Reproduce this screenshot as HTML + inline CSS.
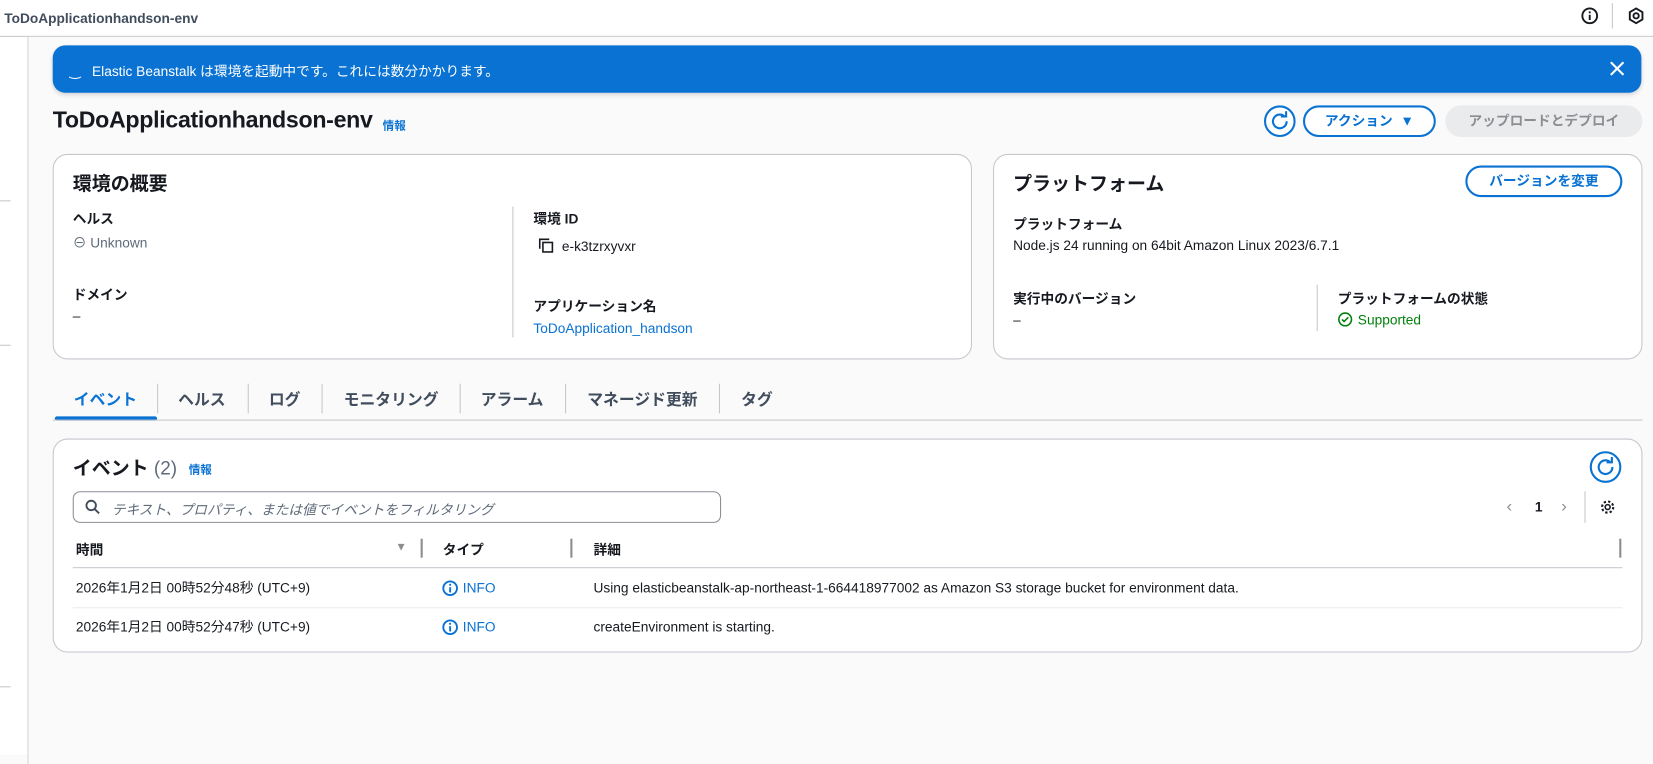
<!DOCTYPE html>
<html><head><meta charset="utf-8"><style>
*{box-sizing:border-box;margin:0;padding:0}
html,body{width:1653px;height:754px;overflow:hidden;background:#fafafa}
#w{position:absolute;left:0;top:0;width:1568px;height:716px;transform:scale(1.0542);transform-origin:0 0;font-family:"Liberation Sans","Noto Sans CJK JP",sans-serif;color:#16191f;font-size:13px}
.a{position:absolute;white-space:nowrap}
.top{left:0;top:0;width:1568px;height:35px;border-bottom:1px solid #c6c6cd;background:#fff}
.side{left:26px;top:35px;width:1px;height:690px;background:#d5d5da}
.main{left:27px;top:35px;width:1545px;height:690px;background:#fafafa}
.card{position:absolute;background:#fff;border:1px solid #c6c6cd;border-radius:14px}
.lbl{font-weight:bold;font-size:13px}
.link{color:#0972d3}
.btn{position:absolute;border:2px solid #0972d3;border-radius:18px;color:#0972d3;font-weight:bold;text-align:center;background:#fff}
.tab{position:absolute;top:368px;font-size:15px;font-weight:bold;color:#414d5c}
.sep{position:absolute;top:364px;width:1px;height:28px;background:#c6c6cd}
</style></head><body><div id="w">
<div class="a" style="left:0;top:0;width:27px;height:716px;background:#fff"></div>
<div class="a top"></div>
<div class="a" style="left:4px;top:10px;font-size:13px;font-weight:bold;color:#414d5c">ToDoApplicationhandson-env</div>
<svg class="a" style="left:1499px;top:6px" width="18" height="18" viewBox="0 0 18 18"><circle cx="9" cy="9" r="7" fill="none" stroke="#16191f" stroke-width="1.8"/><rect x="8.1" y="8" width="1.8" height="5" fill="#16191f"/><rect x="8.1" y="4.8" width="1.8" height="1.8" fill="#16191f"/></svg>
<div class="a" style="left:1529px;top:3px;width:1px;height:24px;background:#c6c6cd"></div>
<svg class="a" style="left:1543px;top:6px" width="18" height="18" viewBox="0 0 18 18"><path d="M9 2L15 5.5V12.5L9 16L3 12.5V5.5Z" fill="none" stroke="#16191f" stroke-width="1.8"/><circle cx="9" cy="9" r="2.5" fill="none" stroke="#16191f" stroke-width="1.8"/></svg>
<div class="a main"></div>
<div class="a side"></div>
<div class="a" style="left:0;top:190px;width:10px;height:1px;background:#c6c6cd"></div>
<div class="a" style="left:0;top:327px;width:10px;height:1px;background:#c6c6cd"></div>
<div class="a" style="left:0;top:651px;width:10px;height:1px;background:#c6c6cd"></div>

<div class="a" style="left:50px;top:43px;width:1507px;height:45px;background:#0972d3;border-radius:12px;box-shadow:0 2px 4px rgba(0,0,0,.15)"></div>
<div class="a" style="left:66px;top:57px;color:#fff;font-size:13px">‿&nbsp;&nbsp; Elastic Beanstalk は環境を起動中です。これには数分かかります。</div>
<svg class="a" style="left:1526px;top:57px" width="16" height="16" viewBox="0 0 16 16"><path d="M2 2L14 14M14 2L2 14" stroke="#fff" stroke-width="2"/></svg>

<div class="a" style="left:50px;top:101px;font-size:22px;font-weight:bold;letter-spacing:-0.3px">ToDoApplicationhandson-env</div>
<div class="a link" style="left:363px;top:111px;font-size:11px;font-weight:bold">情報</div>
<div class="btn" style="left:1199px;top:100px;width:30px;height:30px;border-radius:50%"><svg width="26" height="26" viewBox="0 0 26 26"><path d="M18 9A6.5 6.5 0 1 0 19.5 13" fill="none" stroke="#0972d3" stroke-width="2"/><path d="M14 8.5H19V3.5" fill="none" stroke="#0972d3" stroke-width="2"/></svg></div>
<div class="btn" style="left:1236px;top:100px;width:126px;height:30px;line-height:26px;font-size:13px">アクション&nbsp; ▼</div>
<div class="a" style="left:1371px;top:100px;width:187px;height:30px;background:#e9ebed;border-radius:18px;text-align:center;line-height:30px;color:#8d8d92;font-weight:bold">アップロードとデプロイ</div>

<div class="card" style="left:50px;top:146px;width:872px;height:195px"></div>
<div class="a" style="left:69px;top:160px;font-size:18px;font-weight:bold">環境の概要</div>
<div class="a lbl" style="left:69px;top:197px">ヘルス</div>
<div class="a" style="left:69px;top:220px;color:#5f6b7a">⊖ Unknown</div>
<div class="a lbl" style="left:69px;top:269px">ドメイン</div>
<div class="a" style="left:69px;top:292px">–</div>
<div class="a" style="left:486px;top:196px;width:1px;height:124px;background:#c6c6cd"></div>
<div class="a lbl" style="left:506px;top:197px">環境 ID</div>
<svg class="a" style="left:510px;top:225px" width="16" height="16" viewBox="0 0 16 16"><rect x="5" y="5" width="9" height="9" fill="none" stroke="#16191f" stroke-width="1.5"/><path d="M2 11V2H11" fill="none" stroke="#16191f" stroke-width="1.5"/></svg>
<div class="a" style="left:533px;top:226px">e-k3tzrxyvxr</div>
<div class="a lbl" style="left:506px;top:280px">アプリケーション名</div>
<div class="a link" style="left:506px;top:304px">ToDoApplication_handson</div>

<div class="card" style="left:942px;top:146px;width:616px;height:195px"></div>
<div class="a" style="left:961px;top:160px;font-size:18px;font-weight:bold">プラットフォーム</div>
<div class="btn" style="left:1390px;top:157px;width:149px;height:30px;line-height:26px">バージョンを変更</div>
<div class="a lbl" style="left:961px;top:202px">プラットフォーム</div>
<div class="a" style="left:961px;top:225px">Node.js 24 running on 64bit Amazon Linux 2023/6.7.1</div>
<div class="a lbl" style="left:961px;top:273px">実行中のバージョン</div>
<div class="a" style="left:961px;top:296px">–</div>
<div class="a" style="left:1249px;top:270px;width:1px;height:44px;background:#c6c6cd"></div>
<div class="a lbl" style="left:1269px;top:273px">プラットフォームの状態</div>
<svg class="a" style="left:1269px;top:296px" width="14" height="14" viewBox="0 0 14 14"><circle cx="7" cy="7" r="6" fill="none" stroke="#037f0c" stroke-width="1.5"/><path d="M4 7L6 9L10 5" fill="none" stroke="#037f0c" stroke-width="1.5"/></svg>
<div class="a" style="left:1288px;top:296px;color:#037f0c">Supported</div>

<div class="tab" style="left:70px;color:#0972d3">イベント</div>
<div class="a" style="left:52px;top:395px;width:97px;height:4px;background:#0972d3;border-radius:2px"></div>
<div class="sep" style="left:149px"></div>
<div class="tab" style="left:169px">ヘルス</div>
<div class="sep" style="left:235px"></div>
<div class="tab" style="left:255px">ログ</div>
<div class="sep" style="left:305px"></div>
<div class="tab" style="left:326px">モニタリング</div>
<div class="sep" style="left:436px"></div>
<div class="tab" style="left:456px">アラーム</div>
<div class="sep" style="left:536px"></div>
<div class="tab" style="left:557px">マネージド更新</div>
<div class="sep" style="left:682px"></div>
<div class="tab" style="left:703px">タグ</div>
<div class="a" style="left:50px;top:398px;width:1508px;height:1px;background:#c6c6cd"></div>

<div class="card" style="left:50px;top:416px;width:1508px;height:203px"></div>
<div class="a" style="left:69px;top:430px;font-size:18px;font-weight:bold">イベント <span style="font-weight:normal;color:#5f6b7a">(2)</span></div>
<div class="a link" style="left:179px;top:437px;font-size:11px;font-weight:bold">情報</div>
<div class="btn" style="left:1508px;top:428px;width:30px;height:30px;border-radius:50%"><svg width="26" height="26" viewBox="0 0 26 26"><path d="M18 9A6.5 6.5 0 1 0 19.5 13" fill="none" stroke="#0972d3" stroke-width="2"/><path d="M14 8.5H19V3.5" fill="none" stroke="#0972d3" stroke-width="2"/></svg></div>
<div class="a" style="left:69px;top:466px;width:615px;height:30px;border:1px solid #8c8c94;border-radius:7px;background:#fff"></div>
<svg class="a" style="left:80px;top:473px" width="16" height="16" viewBox="0 0 16 16"><circle cx="6.5" cy="6.5" r="4.5" fill="none" stroke="#414d5c" stroke-width="1.8"/><path d="M10 10L14 14" stroke="#414d5c" stroke-width="1.8"/></svg>
<div class="a" style="left:106px;top:473px;color:#5f6b7a;font-style:italic">テキスト、プロパティ、または値でイベントをフィルタリング</div>
<div class="a" style="left:1429px;top:472px;color:#8d8d92;font-size:16px">‹</div>
<div class="a" style="left:1456px;top:473px;font-weight:bold">1</div>
<div class="a" style="left:1481px;top:472px;color:#8d8d92;font-size:16px">›</div>
<div class="a" style="left:1503px;top:466px;width:1px;height:30px;background:#c6c6cd"></div>
<svg class="a" style="left:1517px;top:473px" width="16" height="16" viewBox="0 0 16 16"><circle cx="8" cy="8" r="2.3" fill="none" stroke="#16191f" stroke-width="1.5"/><circle cx="8" cy="8" r="5.3" fill="none" stroke="#16191f" stroke-width="2" stroke-dasharray="2.2 2"/></svg>

<div class="a lbl" style="left:72px;top:511px">時間</div>
<div class="a" style="left:375px;top:513px;color:#8d8d92;font-size:11px">▼</div>
<div class="a" style="left:399px;top:511px;width:2px;height:18px;background:#8d8d92"></div>
<div class="a lbl" style="left:420px;top:511px">タイプ</div>
<div class="a" style="left:541px;top:511px;width:2px;height:18px;background:#8d8d92"></div>
<div class="a lbl" style="left:563px;top:511px">詳細</div>
<div class="a" style="left:1536px;top:511px;width:2px;height:18px;background:#8d8d92"></div>
<div class="a" style="left:69px;top:538px;width:1470px;height:1px;background:#c6c6cd"></div>
<div class="a" style="left:72px;top:547px">2026年1月2日 00時52分48秒 (UTC+9)</div>
<svg class="a" style="left:419px;top:550px" width="16" height="16" viewBox="0 0 16 16"><circle cx="8" cy="8" r="6.5" fill="none" stroke="#0972d3" stroke-width="1.8"/><rect x="7.1" y="7" width="1.8" height="5" fill="#0972d3"/><rect x="7.1" y="3.8" width="1.8" height="1.8" fill="#0972d3"/></svg>
<div class="a link" style="left:439px;top:550px">INFO</div>
<div class="a" style="left:563px;top:550px">Using elasticbeanstalk-ap-northeast-1-664418977002 as Amazon S3 storage bucket for environment data.</div>
<div class="a" style="left:69px;top:576px;width:1470px;height:1px;background:#e9ebed"></div>
<div class="a" style="left:72px;top:584px">2026年1月2日 00時52分47秒 (UTC+9)</div>
<svg class="a" style="left:419px;top:587px" width="16" height="16" viewBox="0 0 16 16"><circle cx="8" cy="8" r="6.5" fill="none" stroke="#0972d3" stroke-width="1.8"/><rect x="7.1" y="7" width="1.8" height="5" fill="#0972d3"/><rect x="7.1" y="3.8" width="1.8" height="1.8" fill="#0972d3"/></svg>
<div class="a link" style="left:439px;top:587px">INFO</div>
<div class="a" style="left:563px;top:587px">createEnvironment is starting.</div>
</div></body></html>
